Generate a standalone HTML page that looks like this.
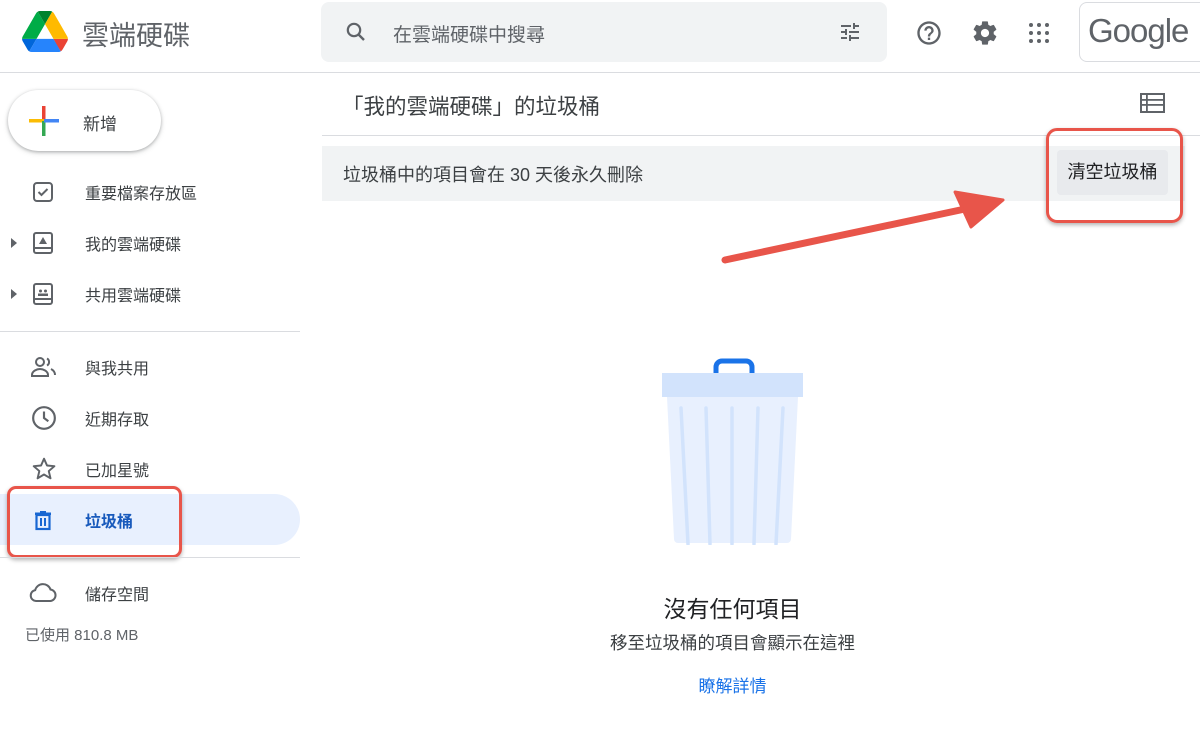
<!DOCTYPE html>
<html><head><meta charset="utf-8"><style>
*{box-sizing:border-box;margin:0;padding:0}
body{width:1200px;height:755px;background:#fff;font-family:"Liberation Sans","Noto Sans CJK TC",sans-serif;color:#3c4043;position:relative;overflow:hidden}
.a{position:absolute}
.nav{position:absolute;left:0;width:300px;height:51px;display:flex;align-items:center;font-size:16px;color:#3c4043}
.nav svg{position:absolute;left:31px}
.nav span{position:absolute;left:85px}
.tri{position:absolute;left:11px;width:0;height:0;border-top:5px solid transparent;border-bottom:5px solid transparent;border-left:6px solid #5f6368}
</style></head><body>
<svg class="a" style="left:22px;top:11px" width="46" height="41" viewBox="0 0 87.3 78">
<path d="M6.6 66.85l3.85 6.65c.8 1.4 1.950 2.5 3.3 3.3L27.5 53H0c0 1.55.4 3.1 1.2 4.5z" fill="#0066da"/>
<path d="M43.65 25L29.9 1.2c-1.35.8-2.5 1.9-3.3 3.3L1.2 48.5C.4 49.9 0 51.45 0 53h27.5z" fill="#00ac47"/>
<path d="M73.55 76.8c1.35-.8 2.5-1.9 3.3-3.3l1.6-2.75 7.65-13.25c.8-1.4 1.2-2.95 1.2-4.5H59.8l5.85 11.5z" fill="#ea4335"/>
<path d="M43.65 25L57.4 1.2C56.05.4 54.5 0 52.9 0H34.4c-1.6 0-3.15.45-4.5 1.2z" fill="#00832d"/>
<path d="M59.8 53H27.5L13.75 76.8c1.35.8 2.9 1.2 4.5 1.2h50.8c1.6 0 3.15-.45 4.5-1.2z" fill="#2684fc"/>
<path d="M73.4 26.5L60.7 4.5c-.8-1.4-1.95-2.5-3.3-3.3L43.65 25 59.8 53h27.45c0-1.55-.4-3.1-1.2-4.5z" fill="#ffba00"/>
</svg>
<div class="a" style="left:82px;top:14px;font-size:27px;color:#5f6368">雲端硬碟</div>
<div class="a" style="left:321px;top:2px;width:566px;height:60px;background:#f1f3f4;border-radius:8px"></div>
<svg class="a" style="left:344px;top:20px" width="24" height="24" viewBox="0 0 24 24"><circle cx="10" cy="10" r="6.2" fill="none" stroke="#5f6368" stroke-width="2.2"/><path d="M14.5 14.5L20 20" stroke="#5f6368" stroke-width="2.4"/></svg>
<div class="a" style="left:393px;top:20px;font-size:19px;color:#5f6368">在雲端硬碟中搜尋</div>
<svg class="a" style="left:838px;top:20px" width="24" height="24" viewBox="0 0 24 24" fill="#5f6368"><path d="M3 17v2h6v-2H3zM3 5v2h10V5H3zm10 16v-2h8v-2h-8v-2h-2v6h2zM7 9v2H3v2h4v2h2V9H7zm14 4v-2H11v2h10zm-6-4h2V7h4V5h-4V3h-2v6z"/></svg>
<svg class="a" style="left:915px;top:19px" width="28" height="28" viewBox="0 0 24 24" fill="#5f6368"><path d="M11 18h2v-2h-2v2zm1-16C6.48 2 2 6.48 2 12s4.48 10 10 10 10-4.48 10-10S17.52 2 12 2zm0 18c-4.410 0-8-3.59-8-8s3.59-8 8-8 8 3.59 8 8-3.59 8-8 8zm0-14c-2.21 0-4 1.79-4 4h2c0-1.1.9-2 2-2s2 .9 2 2c0 2-3 1.75-3 5h2c0-2.25 3-2.5 3-5 0-2.21-1.79-4-4-4z"/></svg>
<svg class="a" style="left:971px;top:19px" width="28" height="28" viewBox="0 0 24 24" fill="#5f6368"><path d="M19.43 12.98c.04-.32.07-.64.07-.98s-.03-.66-.07-.98l2.11-1.65c.19-.15.24-.42.12-.64l-2-3.46c-.12-.22-.39-.3-.61-.22l-2.49 1c-.52-.4-1.08-.73-1.690-.98l-.38-2.65A.49.49 0 0014 2h-4c-.25 0-.46.18-.49.42l-.38 2.650c-.61.25-1.17.59-1.69.98l-2.49-1c-.23-.09-.49 0-.61.22l-2 3.46c-.13.22-.07.49.12.64l2.11 1.65c-.04.32-.07.65-.07.98s.03.66.07.98l-2.11 1.65c-.19.15-.24.42-.12.64l2 3.46c.12.22.39.3.61.22l2.49-1c.52.4 1.08.73 1.69.98l.38 2.65c.03.24.24.42.49.42h4c.25 0 .46-.18.49-.42l.38-2.65c.61-.25 1.17-.59 1.69-.98l2.49 1c.23.09.49 0 .61-.22l2-3.46c.12-.22.07-.49-.12-.64l-2.11-1.65zM12 15.5c-1.93 0-3.5-1.57-3.5-3.5s1.57-3.5 3.5-3.5 3.5 1.57 3.5 3.5-1.57 3.5-3.5 3.5z"/></svg>
<svg class="a" style="left:1027px;top:21px" width="24" height="24" viewBox="0 0 24 24" fill="#5f6368"><circle cx="4" cy="4" r="2"/><circle cx="12" cy="4" r="2"/><circle cx="20" cy="4" r="2"/><circle cx="4" cy="12" r="2"/><circle cx="12" cy="12" r="2"/><circle cx="20" cy="12" r="2"/><circle cx="4" cy="20" r="2"/><circle cx="12" cy="20" r="2"/><circle cx="20" cy="20" r="2"/></svg>
<div class="a" style="left:1079px;top:2px;width:140px;height:60px;border:1px solid #dadce0;border-radius:8px"></div>
<div class="a" style="left:1088px;top:12px;font-size:33px;color:#5f6368;letter-spacing:-1px">Google</div>
<div class="a" style="left:0;top:72px;width:1200px;height:1px;background:#dadce0"></div>
<div class="a" style="left:8px;top:90px;width:153px;height:61px;border-radius:31px;background:#fff;box-shadow:0 1px 3px rgba(60,64,67,.35),0 2px 6px rgba(60,64,67,.15)"></div>
<svg class="a" style="left:28px;top:105px" width="32" height="32" viewBox="0 0 32 32"><rect x="14" y="1" width="3.5" height="15" fill="#ea4335"/><rect x="1" y="14" width="15" height="3.5" fill="#fbbc04"/><rect x="14" y="16" width="3.5" height="15" fill="#34a853"/><rect x="16" y="14" width="15" height="3.5" fill="#4285f4"/></svg>
<div class="a" style="left:83px;top:110px;font-size:17px;color:#3c4043">新增</div>

<div class="nav" style="top:166px"><svg width="24" height="24" viewBox="0 0 24 24"><rect x="3" y="3" width="18" height="18" rx="3" fill="none" stroke="#5f6368" stroke-width="2"/><path d="M7.5 12l3 3 6-6" fill="none" stroke="#5f6368" stroke-width="2"/></svg><span>重要檔案存放區</span></div>
<div class="nav" style="top:217px"><i class="tri"></i><svg width="24" height="24" viewBox="0 0 24 24"><rect x="3" y="2" width="18" height="20" rx="2" fill="none" stroke="#5f6368" stroke-width="2"/><path d="M3 17h18" stroke="#5f6368" stroke-width="2"/><path d="M12 6l4 7H8z" fill="#5f6368"/></svg><span>我的雲端硬碟</span></div>
<div class="nav" style="top:268px"><i class="tri"></i><svg width="24" height="24" viewBox="0 0 24 24"><rect x="3" y="2" width="18" height="20" rx="2" fill="none" stroke="#5f6368" stroke-width="2"/><path d="M3 17h18" stroke="#5f6368" stroke-width="2"/><circle cx="9.5" cy="9" r="1.5" fill="#5f6368"/><circle cx="14.5" cy="9" r="1.5" fill="#5f6368"/><rect x="7" y="11.5" width="10" height="2.5" fill="#5f6368"/></svg><span>共用雲端硬碟</span></div>
<div class="a" style="left:0;top:331px;width:300px;height:1px;background:#dadce0"></div>
<div class="nav" style="top:341px"><svg width="28" height="24" viewBox="0 0 28 24" style="left:30px"><circle cx="10" cy="7" r="4" fill="none" stroke="#5f6368" stroke-width="2"/><path d="M2 20c0-4 5-6 8-6s8 2 8 6v1H2z" fill="none" stroke="#5f6368" stroke-width="2"/><path d="M17 3.5a4 4 0 010 7M21 14c2 1 4 2.5 4 6" fill="none" stroke="#5f6368" stroke-width="2"/></svg><span>與我共用</span></div>
<div class="nav" style="top:392px"><svg width="26" height="26" viewBox="0 0 24 24"><circle cx="12" cy="12" r="10" fill="none" stroke="#5f6368" stroke-width="2"/><path d="M12 6v6l4 3" fill="none" stroke="#5f6368" stroke-width="2"/></svg><span>近期存取</span></div>
<div class="nav" style="top:443px"><svg width="26" height="26" viewBox="0 0 24 24"><path d="M12 2.5l2.8 6.3 6.8.6-5.2 4.5 1.6 6.7L12 17.1l-5.9 3.5 1.6-6.7-5.2-4.5 6.8-.6z" fill="none" stroke="#5f6368" stroke-width="1.8" stroke-linejoin="round"/></svg><span>已加星號</span></div>
<div class="a" style="left:0;top:494px;width:300px;height:51px;background:#e8f0fe;border-radius:0 26px 26px 0"></div>
<div class="nav" style="top:494px;color:#185abc;font-weight:bold"><svg width="24" height="24" viewBox="0 0 24 24"><path d="M9 3h6v1.5h5V7H4V4.5h5z" fill="#1967d2"/><rect x="5.5" y="7" width="13" height="14" fill="none" stroke="#1967d2" stroke-width="2.2"/><path d="M10 10v8M14 10v8" stroke="#1967d2" stroke-width="2"/></svg><span>垃圾桶</span></div>
<div class="a" style="left:7px;top:486px;width:175px;height:72px;border:3px solid #e8554a;border-radius:9px;box-shadow:0 2px 4px rgba(0,0,0,.3)"></div>
<div class="a" style="left:0;top:557px;width:300px;height:1px;background:#dadce0"></div>
<div class="nav" style="top:567px"><svg width="30" height="24" viewBox="0 0 30 24" style="left:28px"><path d="M8 20a5.5 5.5 0 01-.8-10.9A8 8 0 0122.5 8.5 5.8 5.8 0 0122.5 20z" fill="none" stroke="#5f6368" stroke-width="2"/></svg><span>儲存空間</span></div>
<div class="a" style="left:25px;top:624px;font-size:15px;color:#5f6368">已使用 810.8 MB</div>
<div class="a" style="left:342px;top:90px;font-size:21.5px;color:#3c4043">「我的雲端硬碟」的垃圾桶</div>
<svg class="a" style="left:1140px;top:93px" width="25" height="20" viewBox="0 0 25 20" fill="#5f6368"><rect x="1" y="1" width="23" height="18" fill="none" stroke="#5f6368" stroke-width="2"/><rect x="1" y="6" width="23" height="1.8"/><rect x="1" y="11" width="23" height="1.8"/><rect x="6" y="1" width="1.8" height="18"/></svg>
<div class="a" style="left:322px;top:135px;width:878px;height:1px;background:#dadce0"></div>
<div class="a" style="left:322px;top:146px;width:863px;height:55px;background:#f1f3f4"></div>
<div class="a" style="left:343px;top:161px;font-size:18px;color:#3c4043">垃圾桶中的項目會在 30 天後永久刪除</div>
<div class="a" style="left:1057px;top:150px;width:111px;height:45px;background:#e8eaed;border-radius:4px;font-size:18px;color:#202124;text-align:center;line-height:45px">清空垃圾桶</div>
<div class="a" style="left:1046px;top:128px;width:137px;height:95px;border:3px solid #e8554a;border-radius:11px;box-shadow:0 2px 4px rgba(0,0,0,.3)"></div>
<svg class="a" style="left:715px;top:185px" width="300" height="90" viewBox="0 0 300 90"><path d="M10 75L250 24" stroke="#e8554a" stroke-width="7" stroke-linecap="round"/><path d="M288 15L240 7 256 42z" fill="#e8554a" stroke="#e8554a" stroke-width="3" stroke-linejoin="round"/></svg>
<svg class="a" style="left:660px;top:355px" width="146" height="190" viewBox="0 0 146 190">
<path d="M56 18v-6a6 6 0 016-6h24a6 6 0 016 6v6" fill="none" stroke="#1a73e8" stroke-width="5"/>
<path d="M7 42h131l-7 142a4 4 0 01-4 4H18a4 4 0 01-4-4z" fill="#e8f0fe"/>
<rect x="2" y="18" width="141" height="24" fill="#d2e3fc"/>
<g stroke="#d2e3fc" stroke-width="3.5" stroke-linecap="round"><path d="M21 53l7 136M46 53l4 136M72 53v136M98 53l-4 136M123 53l-7 136"/></g>
</svg>
<div class="a" style="left:0;top:590px;width:1465px;text-align:center;font-size:23px;color:#202124">沒有任何項目</div>
<div class="a" style="left:0;top:630px;width:1465px;text-align:center;font-size:17.5px;color:#3c4043">移至垃圾桶的項目會顯示在這裡</div>
<div class="a" style="left:0;top:672px;width:1465px;text-align:center;font-size:17px;color:#1a73e8">瞭解詳情</div>
</body></html>
